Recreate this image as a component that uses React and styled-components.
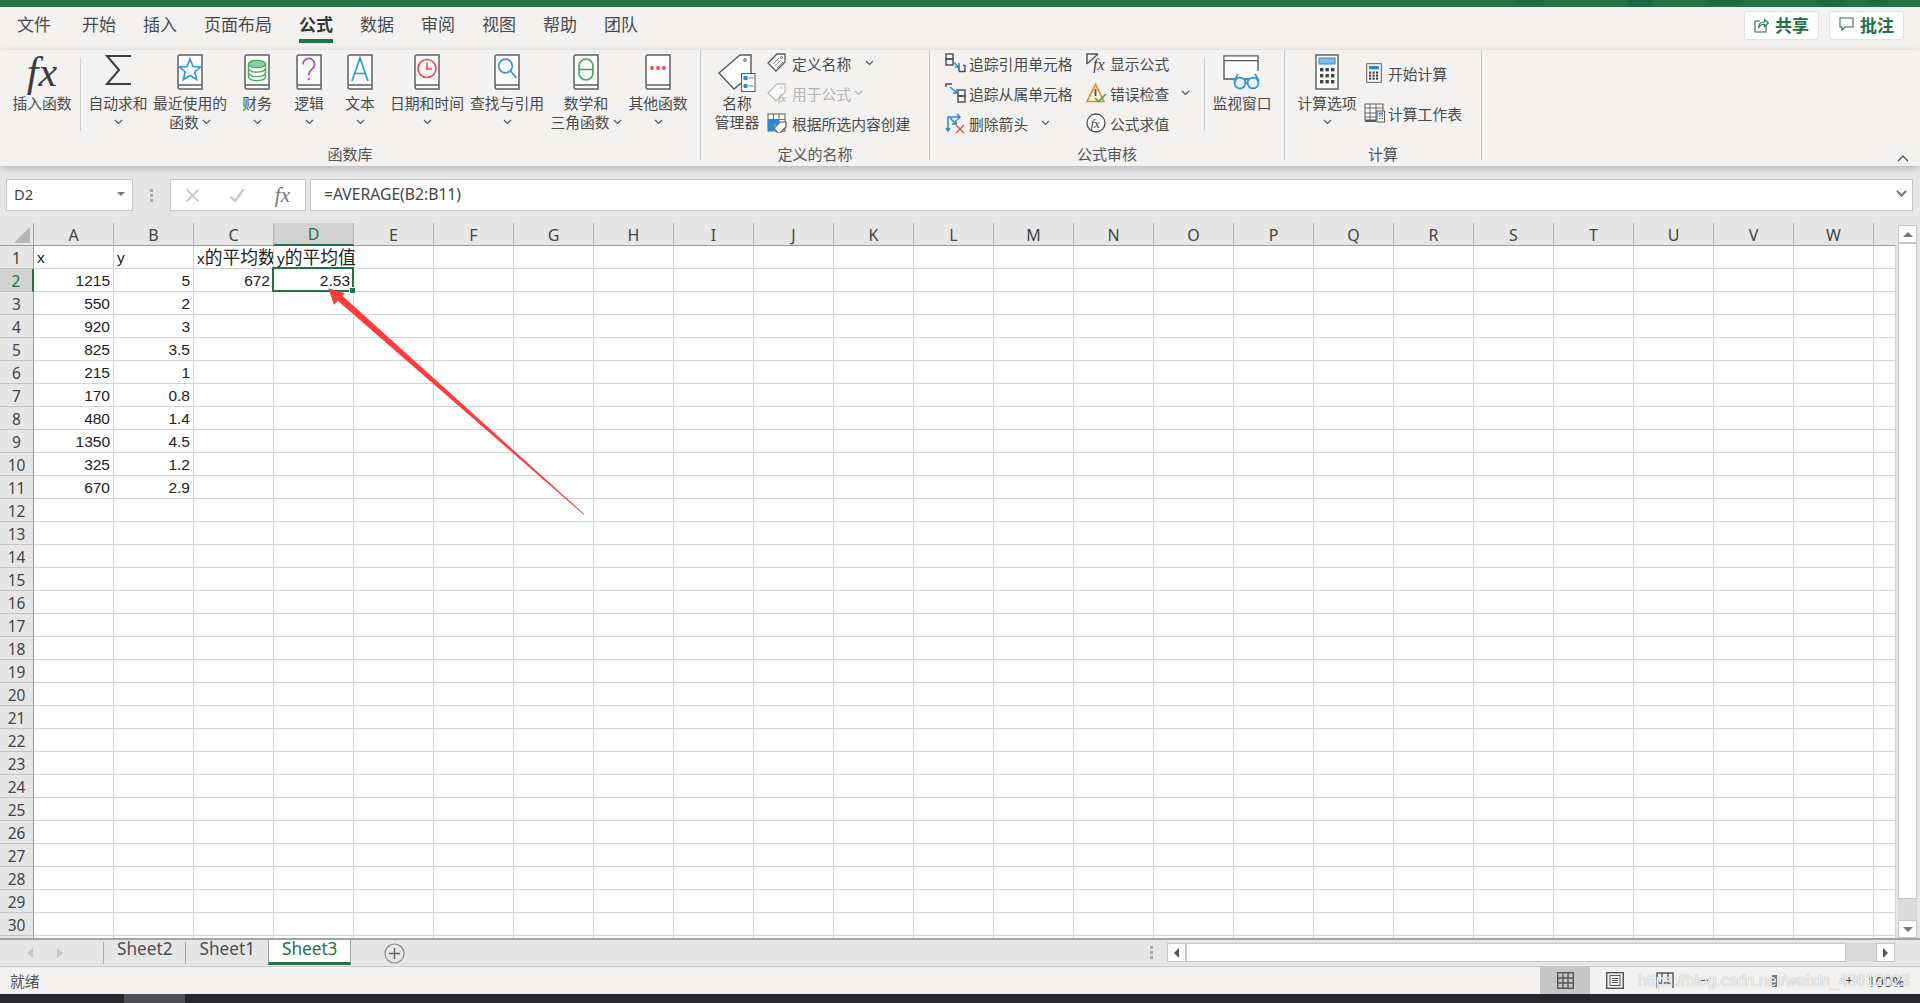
import React from 'react';
import styled, { createGlobalStyle } from 'styled-components';

const GlobalStyle = createGlobalStyle`
  html, body {
    margin: 0;
    padding: 0;
    background: #e6e6e6;
    overflow: hidden;
  }
  * {
    box-sizing: border-box;
  }
`;

const CJK = `"Noto Sans CJK SC", "Noto Sans", sans-serif`;
const GREEN = '#217346';
const INK = '#4a4a4a';

const Page = styled.div`
  position: relative;
  width: 1920px;
  height: 1003px;
  overflow: hidden;
  display: flex;
  flex-direction: column;
  font-family: ${CJK};
  color: ${INK};
`;

const TitleStrip = styled.div`
  height: 7px;
  flex: none;
  background: ${GREEN};
  display: flex;
  justify-content: flex-end;
`;

const TabBar = styled.div`
  height: 43px;
  flex: none;
  background: #f3f2f1;
  display: flex;
  align-items: flex-start;
  padding: 0 16px 0 17px;
  gap: 27px;
`;

const MenuTab = styled.div`
  height: 36px;
  padding-top: 3px;
  font-size: 17px;
  line-height: 28px;
  font-weight: ${p => (p.$active ? 700 : 400)};
  color: ${p => (p.$active ? '#2f3a34' : INK)};
  border-bottom: ${p => (p.$active ? `4px solid ${GREEN}` : 'none')};
  margin-right: ${p => (p.$gapAfter ? '4px' : 0)};
`;

const TopActions = styled.div`
  margin-left: auto;
  display: flex;
  gap: 10px;
  padding-top: 4px;
`;

const ActionButton = styled.div`
  width: 75px;
  height: 29px;
  background: #fff;
  border: 1px solid #e3e3e3;
  border-radius: 3px;
  display: flex;
  align-items: center;
  justify-content: center;
  gap: 6px;
  padding-bottom: 2px;
  color: ${GREEN};
  font-weight: 700;
  font-size: 17px;
`;

const Ribbon = styled.div`
  position: relative;
  z-index: 3;
  height: 116px;
  flex: none;
  background: #f3f2f1;
  box-shadow: 0 2px 7px rgba(0, 0, 0, 0.22);
  display: flex;
`;

const Group = styled.div`
  width: ${p => p.$width}px;
  flex: none;
  height: 110px;
  border-right: 1px solid #c8c8c8;
  display: flex;
  flex-direction: column;
`;

const GroupTools = styled.div`
  height: 96px;
  flex: none;
  display: flex;
  padding-left: ${p => p.$pad || 0}px;
`;

const GroupLabel = styled.div`
  height: 14px;
  font-size: 15px;
  line-height: 15px;
  text-align: center;
  color: #555;
`;

const InnerDivider = styled.div`
  width: 1px;
  height: 74px;
  margin: 7px ${p => p.$after || 0}px 0 0;
  background: #cfcfcf;
  flex: none;
`;

const BigButton = styled.div`
  width: ${p => p.$width}px;
  flex: none;
  display: flex;
  flex-direction: column;
  align-items: center;
  padding-top: 4px;
`;

const BigIcon = styled.div`
  height: 36px;
  margin-bottom: 3px;
  display: flex;
  align-items: flex-start;
  justify-content: center;
`;

const BigLine = styled.div`
  height: 19px;
  line-height: 19px;
  font-size: 14.8px;
  white-space: nowrap;
  display: flex;
  align-items: center;
  gap: 3px;
`;

const SmallColumn = styled.div`
  width: ${p => p.$width}px;
  flex: none;
  display: flex;
  flex-direction: column;
  margin-top: ${p => p.$top || 0}px;
`;

const SmallRow = styled.div`
  height: ${p => p.$height || 30}px;
  flex: none;
  display: flex;
  align-items: center;
  font-size: 14.8px;
  white-space: nowrap;
  color: ${p => (p.$muted ? '#b4b4b4' : INK)};
`;

const SmallIcon = styled.span`
  width: ${p => p.$width || 25}px;
  height: 20px;
  flex: none;
  display: flex;
  align-items: center;
  padding-left: ${p => p.$inset || 0}px;
`;

const SmallChevron = styled.span`
  display: flex;
  margin-left: ${p => p.$gap}px;
`;

const FxMark = styled.span`
  font-family: "Liberation Serif", serif;
  font-style: italic;
  font-size: ${p => p.$size}px;
  line-height: ${p => p.$line}px;
  color: ${p => p.$color || '#3c3c3c'};
`;

const CollapseButton = styled.div`
  position: absolute;
  right: 11px;
  top: 104px;
  display: flex;
`;

const FormulaBar = styled.div`
  height: 57px;
  flex: none;
  background: #e6e6e6;
  display: flex;
  padding: 13px 7px 12px 6px;
`;

const NameBox = styled.div`
  width: 127px;
  background: #fff;
  border: 1px solid #c6c6c6;
  display: flex;
  align-items: center;
  justify-content: space-between;
  padding: 0 7px 2px 7px;
  font-family: "Noto Sans", sans-serif;
  font-size: 14.8px;
  color: #444;
`;

const DropTriangle = styled.span`
  width: 0;
  height: 0;
  border-left: 4px solid transparent;
  border-right: 4px solid transparent;
  border-top: 4px solid #777;
`;

const GripDots = styled.div`
  width: 37px;
  flex: none;
  display: flex;
  flex-direction: column;
  align-items: center;
  justify-content: center;
  gap: 2px;
`;

const GripDot = styled.span`
  width: 3px;
  height: 3px;
  background: #a6a6a6;
`;

const FormulaButtons = styled.div`
  width: 136px;
  flex: none;
  background: #fff;
  border: 1px solid #c6c6c6;
  display: flex;
  align-items: center;
  justify-content: space-between;
  padding: 0 15px 0 14px;
`;

const FormulaInput = styled.div`
  flex: 1;
  margin-left: 4px;
  background: #fff;
  border: 1px solid #c6c6c6;
  display: flex;
  align-items: center;
  justify-content: space-between;
  padding: 0 5px 2px 13px;
  font-family: "Noto Sans", sans-serif;
  font-size: 15.7px;
  color: #444;
`;

const SheetArea = styled.div`
  height: 715px;
  flex: none;
  display: flex;
  position: relative;
  background: #e6e6e6;
`;

const Grid = styled.div`
  width: 1896px;
  flex: none;
  height: 715px;
  overflow: hidden;
  display: grid;
  grid-template-columns: 34px repeat(23, 80px) 22px;
  grid-auto-rows: 23px;
  font-family: "Liberation Sans", sans-serif;
  font-size: 15.5px;
  color: #222;
`;

const Corner = styled.div`
  background: #e6e6e6;
  border-right: 1px solid #a8a8a8;
  border-bottom: 1px solid #9c9c9c;
  display: flex;
  align-items: flex-end;
  justify-content: flex-end;
  padding: 0 3px 2px 0;
`;

const ColHead = styled.div`
  background: ${p => (p.$active ? '#d2d2d2' : '#e6e6e6')};
  border-right: 1px solid ${p => (p.$end ? 'transparent' : '#b4b4b4')};
  border-bottom: ${p => (p.$active ? `2px solid ${GREEN}` : '1px solid #9c9c9c')};
  display: flex;
  align-items: center;
  justify-content: center;
  padding-top: 1px;
  font-family: "Noto Sans", sans-serif;
  font-size: 16px;
  color: ${p => (p.$active ? GREEN : '#444')};
`;

const RowHead = styled.div`
  background: ${p => (p.$active ? '#d2d2d2' : '#e6e6e6')};
  border-right: ${p => (p.$active ? `2px solid ${GREEN}` : '1px solid #9c9c9c')};
  border-bottom: 1px solid #c2c2c2;
  display: flex;
  align-items: center;
  justify-content: center;
  padding-top: 2px;
  font-family: "Noto Sans", sans-serif;
  font-size: 15.5px;
  color: ${p => (p.$active ? GREEN : '#444')};
`;

const Cell = styled.div`
  position: relative;
  background: #fff;
  border-right: 1px solid #d4d4d4;
  border-bottom: 1px solid #d4d4d4;
  display: flex;
  align-items: flex-end;
  justify-content: ${p => (p.$num ? 'flex-end' : 'flex-start')};
  padding: 0 3px 0 3px;
  line-height: 20px;
  white-space: nowrap;
  overflow: ${p => (p.$clip ? 'hidden' : 'visible')};
`;

const CellText = styled.span`
  position: relative;
  top: ${p => p.$drop || 0}px;
  z-index: 1;
  flex: none;
`;

const Han = styled.span`
  font-family: ${CJK};
  font-size: 17.8px;
  line-height: 19px;
`;

const Selection = styled.div`
  position: absolute;
  left: -2px;
  top: -2px;
  right: -1px;
  bottom: -1px;
  border: 2px solid ${GREEN};
  z-index: 2;
`;

const FillHandle = styled.div`
  position: absolute;
  right: -3px;
  bottom: -3px;
  width: 6px;
  height: 6px;
  background: ${GREEN};
  border: 1px solid #fff;
  border-right: none;
  border-bottom: none;
`;

const ArrowLayer = styled.svg`
  position: absolute;
  left: 320px;
  top: 57px;
  z-index: 4;
`;

const VScroll = styled.div`
  width: 24px;
  flex: none;
  padding: 2px 0 0 2px;
  display: flex;
  flex-direction: column;
`;

const ScrollButton = styled.div`
  width: ${p => p.$width || 19}px;
  height: ${p => p.$height || 19}px;
  flex: none;
  background: #fff;
  border: 1px solid #c6c6c6;
  display: flex;
  align-items: center;
  justify-content: center;
`;

const VThumb = styled.div`
  width: 19px;
  height: 656px;
  flex: none;
  background: #fff;
  border: 1px solid #c6c6c6;
`;

const VTrack = styled.div`
  width: 19px;
  flex: 1;
  background: #dadada;
`;

const SheetBar = styled.div`
  height: 29px;
  flex: none;
  background: #e6e6e6;
  border-top: 2px solid #a3a3a3;
  border-bottom: 1px solid #c8c8c8;
  display: flex;
  align-items: flex-start;
`;

const SheetNav = styled.div`
  width: 103px;
  flex: none;
  height: 26px;
  display: flex;
  align-items: center;
  padding-left: 27px;
  gap: 24px;
`;

const SheetTab = styled.div`
  height: ${p => (p.$active ? 25 : 22)}px;
  margin-top: ${p => (p.$active ? 0 : 2)}px;
  padding: 0 13px;
  font-family: "Noto Sans", sans-serif;
  font-size: 17.2px;
  line-height: ${p => (p.$active ? 18 : 14)}px;
  background: ${p => (p.$active ? '#fff' : 'transparent')};
  color: ${p => (p.$active ? GREEN : '#4c4c55')};
  border-left: 1px solid ${p => (p.$active ? '#a3a3a3' : '#a8a8a8')};
  border-right: ${p => (p.$active ? '1px solid #a3a3a3' : 'none')};
  border-bottom: ${p => (p.$active ? `3px solid ${GREEN}` : 'none')};
`;

const AddSheet = styled.div`
  margin: 3px 0 0 33px;
  display: flex;
`;

const HScroll = styled.div`
  margin-left: auto;
  margin-top: 3px;
  width: 745px;
  margin-right: 25px;
  display: flex;
  align-items: center;
`;

const HDots = styled.div`
  width: 17px;
  flex: none;
  display: flex;
  flex-direction: column;
  gap: 2px;
  align-items: flex-start;
`;

const HThumb = styled.div`
  width: 660px;
  height: 19px;
  flex: none;
  background: #fff;
  border: 1px solid #c6c6c6;
`;

const HTrack = styled.div`
  flex: 1;
  height: 19px;
  background: #dadada;
`;

const StatusBar = styled.div`
  position: relative;
  height: 27px;
  flex: none;
  background: #f3f2f1;
  display: flex;
  align-items: center;
  padding-left: 10px;
  font-size: 14.8px;
  color: #555;
`;

const ViewSwitch = styled.div`
  margin-left: auto;
  height: 27px;
  display: flex;
  align-items: center;
  margin-right: 230px;
`;

const ViewButton = styled.div`
  width: 50px;
  height: 27px;
  background: ${p => (p.$active ? '#c6c6c6' : 'transparent')};
  display: flex;
  align-items: center;
  justify-content: center;
`;

const ZoomControls = styled.div`
  position: absolute;
  left: 1700px;
  top: 0;
  width: 216px;
  height: 27px;
  display: flex;
  align-items: center;
  font-family: "Noto Sans", sans-serif;
  font-size: 14.5px;
  color: #444;
`;

const ZoomMinus = styled.span`
  width: 8px;
  height: 1px;
  background: #444;
  flex: none;
`;

const ZoomThumb = styled.span`
  width: 5px;
  height: 12px;
  background: #777;
  flex: none;
  margin-left: 64px;
`;

const ZoomPlus = styled.span`
  flex: none;
  margin-left: 68px;
  line-height: 1;
`;

const ZoomValue = styled.span`
  flex: none;
  margin-left: 14px;
`;

const Watermark = styled.div`
  position: absolute;
  left: 1638px;
  top: 2px;
  font-family: "Liberation Sans", sans-serif;
  font-size: 16px;
  line-height: 24px;
  white-space: nowrap;
  color: rgba(255, 255, 255, 0.88);
  text-shadow: 0 0 1px #888;
  z-index: 5;
`;

const Taskbar = styled.div`
  height: 9px;
  flex: none;
  background: #27262c;
  display: flex;
  overflow: hidden;
`;

const TaskItem = styled.div`
  width: 61px;
  margin-left: 124px;
  background: #4f4e54;
`;

const TaskClock = styled.div`
  margin-left: 1603px;
  padding-top: 6px;
  font-family: "Noto Sans", sans-serif;
  font-size: 13px;
  line-height: 16px;
  color: #fff;
`;

// --- icons ---------------------------------------------------------------

const Chevron = ({ color = '#555' }) => (
  <svg width="9" height="6" viewBox="0 0 9 6">
    <path d="M1 1l3.5 3.5L8 1" fill="none" stroke={color} strokeWidth="1.2" />
  </svg>
);

const Book = ({ children }) => (
  <svg width="27" height="36" viewBox="1 0 27 36">
    <path d="M2 31V3a2 2 0 0 1 2-2h22v30H4a2 2 0 0 0 0 4h22v-4" fill="#fbfbfb" stroke="#5f5f5f" strokeWidth="1.5" />
    {children}
  </svg>
);

const Sigma = () => (
  <svg width="27" height="32" viewBox="0 0 27 32">
    <path d="M26 2H2l12 14L2 30h24" fill="none" stroke="#3e3e3e" strokeWidth="2" />
  </svg>
);

const StarGlyph = () => (
  <path d="M14 5l3 7.5 7.6.5-5.8 5 1.9 7.5-6.7-4-6.7 4 1.9-7.5-5.8-5 7.6-.5z" fill="none" stroke="#2b98de" strokeWidth="1.6" />
);

const StackGlyph = () => (
  <g stroke="#47a860" strokeWidth="1.4" fill="none">
    <ellipse cx="14" cy="10" rx="8.5" ry="3.6" fill="#8fd19e" />
    <path d="M5.5 10v13c0 2 3.8 3.6 8.5 3.6s8.5-1.6 8.5-3.6V10" />
    <path d="M5.5 14.5c0 2 3.8 3.6 8.5 3.6s8.5-1.6 8.5-3.6M5.5 19c0 2 3.8 3.6 8.5 3.6s8.5-1.6 8.5-3.6" />
  </g>
);

const QuestionGlyph = () => (
  <path d="M8 10.5a5.8 5.8 0 1 1 9.3 4.4c-2.4 1.9-3.6 3-3.6 6.4m0 2.4v2.6" fill="none" stroke="#b14ec4" strokeWidth="1.7" />
);

const LetterGlyph = () => (
  <path d="M6 27L14 4l8 23M8.7 19.5h10.6" fill="none" stroke="#2b98de" strokeWidth="1.7" />
);

const ClockGlyph = () => (
  <g fill="none" stroke="#ea4a4a" strokeWidth="1.6">
    <circle cx="14" cy="14.5" r="9" />
    <path d="M14 8.5v6.5h5" />
  </g>
);

const SearchGlyph = () => (
  <g fill="none" stroke="#2b98de" strokeWidth="1.7">
    <circle cx="12.5" cy="12" r="6.8" />
    <path d="M17.5 17l6 7" />
  </g>
);

const ThetaGlyph = () => (
  <g fill="none" stroke="#47a860" strokeWidth="1.7">
    <rect x="7" y="5" width="14" height="21" rx="7" />
    <path d="M7 15.5h14" />
  </g>
);

const DotsGlyph = () => (
  <g fill="#ea4a4a">
    <circle cx="8" cy="14" r="1.9" />
    <circle cx="14" cy="14" r="1.9" />
    <circle cx="20" cy="14" r="1.9" />
  </g>
);

const NameManagerIcon = () => (
  <svg width="38" height="38" viewBox="0 0 38 38">
    <path d="M1 19L22 1h11v20L16 35z" fill="#fbfbfb" stroke="#5a5a5a" strokeWidth="1.4" />
    <circle cx="27" cy="6" r="1.3" fill="none" stroke="#5a5a5a" />
    <rect x="23.5" y="19.5" width="13.5" height="18" fill="#fbfbfb" stroke="#5a5a5a" />
    <rect x="25.5" y="22" width="4" height="4" fill="#2b88d8" />
    <rect x="25.5" y="30" width="4" height="4" fill="#2b88d8" />
    <path d="M30.5 24h5M30.5 32h5" stroke="#2b88d8" strokeWidth="1.2" />
  </svg>
);

const TagIcon = ({ muted }) => {
  const c = muted ? '#bdbdbd' : '#5a5a5a';
  return (
    <svg width="20" height="20" viewBox="0 0 20 20">
      <path d="M1 10L10 1h8v8l-9 9z" fill="#fbfbfb" stroke={c} strokeWidth="1.3" />
      <circle cx="14.5" cy="4.5" r="1" fill="none" stroke={c} />
      {!muted && <path d="M6 11l6-6M8 13l6-6M10 15l6-6" stroke="#8a8a8a" strokeWidth="1" />}
      {muted && (
        <text x="11" y="19" fontFamily="Liberation Serif, serif" fontStyle="italic" fontSize="11" fill="#a8a8a8">fx</text>
      )}
    </svg>
  );
};

const CreateIcon = () => (
  <svg width="20" height="20" viewBox="0 0 20 20">
    <rect x="1" y="1" width="17" height="17" fill="#fbfbfb" stroke="#5a5a5a" />
    <path d="M6.5 1v17M12 1v17M1 6.5h17M1 12h17" stroke="#5a5a5a" strokeWidth="0.9" />
    <rect x="1" y="6.5" width="5.5" height="11.5" fill="#2b88d8" />
    <rect x="6.5" y="6.5" width="5.5" height="5" fill="#2b88d8" />
    <path d="M7 15l6-6h6v5l-6 6h-2z" fill="#fbfbfb" stroke="#5a5a5a" strokeWidth="1.2" />
  </svg>
);

const TracePrecedents = () => (
  <svg width="21" height="20" viewBox="0 0 21 20">
    <g fill="none" stroke="#4e4e4e" strokeWidth="1.4">
      <rect x="1" y="1" width="7" height="5" />
      <rect x="1" y="6" width="7" height="6" />
      <path d="M14 18.5h6v-6h-2" />
      <path d="M14 13.5v5" />
    </g>
    <path d="M8 9l6 5m0-4v4h-4" fill="none" stroke="#2b88d8" strokeWidth="1.5" />
  </svg>
);

const TraceDependents = () => (
  <svg width="21" height="20" viewBox="0 0 21 20">
    <g fill="none" stroke="#4e4e4e" strokeWidth="1.4">
      <path d="M1 4V1h6" />
      <rect x="13" y="7" width="7" height="6" />
      <rect x="13" y="13" width="7" height="6" />
    </g>
    <path d="M5 4l7 6m0-4v4H8" fill="none" stroke="#2b88d8" strokeWidth="1.5" />
  </svg>
);

const RemoveArrows = () => (
  <svg width="21" height="21" viewBox="0 0 21 21">
    <g fill="none" stroke="#2b88d8" strokeWidth="1.5">
      <path d="M3 18V4h12M12 1l3 3-3 3M1 15l2 3 2-3" />
      <path d="M5 5l6 6m0-4v4H7" />
    </g>
    <path d="M11 12l8 8m0-8l-8 8" stroke="#e84a4a" strokeWidth="1.4" />
  </svg>
);

const ShowFormulaIcon = () => (
  <svg width="20" height="20" viewBox="0 0 20 20">
    <path d="M1 11V1h11" fill="none" stroke="#4e4e4e" strokeWidth="1.4" />
    <path d="M1 11L12 1" stroke="#4e4e4e" strokeWidth="1.2" />
    <text x="7" y="17" fontFamily="Liberation Serif, serif" fontStyle="italic" fontSize="16" fill="#3e3e3e">fx</text>
  </svg>
);

const ErrorCheckIcon = () => (
  <svg width="21" height="20" viewBox="0 0 21 20">
    <path d="M9.5 1.5L1 18.5h17z" fill="#fbf3e4" stroke="#e58a1e" strokeWidth="1.6" />
    <path d="M9.5 6v7" stroke="#4e4e4e" strokeWidth="1.8" />
    <path d="M9 15l3.5 3.5L20 11" fill="none" stroke="#47a860" strokeWidth="1.7" />
  </svg>
);

const EvaluateIcon = () => (
  <svg width="20" height="20" viewBox="0 0 20 20">
    <circle cx="10" cy="10" r="9" fill="#fbfbfb" stroke="#4e4e4e" strokeWidth="1.3" />
    <text x="4.5" y="14.5" fontFamily="Liberation Serif, serif" fontStyle="italic" fontSize="13" fill="#3e3e3e">fx</text>
  </svg>
);

const WatchIcon = () => (
  <svg width="40" height="36" viewBox="0 0 40 36">
    <path d="M27 25H2V2h34v15" fill="#fbfbfb" stroke="#5a5a5a" strokeWidth="1.4" />
    <path d="M2 6.5h34" stroke="#5a5a5a" strokeWidth="1.4" />
    <rect x="2.7" y="2.7" width="32.6" height="3.2" fill="#fbfbfb" />
    <g fill="#f3f2f1" stroke="#2b98de" strokeWidth="1.8">
      <circle cx="18" cy="29" r="5.4" />
      <circle cx="31" cy="29" r="5.4" />
    </g>
    <path d="M12 27l4-7M37 27l-4-7M23 29h3" fill="none" stroke="#2b98de" strokeWidth="1.6" />
  </svg>
);

const CalcOptionsIcon = () => (
  <svg width="24" height="36" viewBox="0 0 24 36">
    <rect x="1" y="1" width="22" height="34" fill="#fbfbfb" stroke="#5a5a5a" strokeWidth="1.4" />
    <rect x="4" y="4" width="16" height="6" fill="#86b9e3" stroke="#2b88d8" />
    {[14, 20, 26].map(y => [5, 10.5, 16].map(x => <rect key={`${x}-${y}`} x={x} y={y} width="3.4" height="3.4" fill="#444" />))}
  </svg>
);

const CalcNowIcon = () => (
  <svg width="16" height="20" viewBox="0 0 16 20">
    <rect x="0.7" y="0.7" width="14.6" height="18.6" fill="#fbfbfb" stroke="#5a5a5a" />
    <rect x="3" y="3" width="10" height="3.4" fill="#2b88d8" />
    {[8.5, 11.5, 14.5].map(y => [3, 6.5, 10].map(x => <rect key={`${x}-${y}`} x={x} y={y} width="2.2" height="2.2" fill="#444" />))}
  </svg>
);

const CalcSheetIcon = () => (
  <svg width="21" height="20" viewBox="0 0 21 20">
    <rect x="1" y="1" width="18" height="16" fill="#fbfbfb" stroke="#5a5a5a" />
    <path d="M1 5h18M1 10h18M1 14h12M6 1v16M12 1v16" stroke="#5a5a5a" strokeWidth="0.9" />
    <path d="M1 17h11v2H1z" fill="#5a5a5a" />
    <rect x="13" y="8" width="7.5" height="11" fill="#fbfbfb" stroke="#5a5a5a" />
    <rect x="14.5" y="9.5" width="4.5" height="2" fill="#2b88d8" />
    <path d="M15 13h1.4M17.6 13H19M15 15.5h1.4M17.6 15.5H19" stroke="#444" strokeWidth="1.2" />
  </svg>
);

const ShareIcon = () => (
  <svg width="15" height="16" viewBox="0 0 15 16">
    <path d="M6 4H1v11h11V9" fill="none" stroke={GREEN} strokeWidth="1.1" />
    <path d="M4.5 11c0-4 2.5-6 6-6V2.5L14.5 6 10.5 9.5V7.2c-3 0-4.6 1-6 3.8z" fill="#f4f9f6" stroke={GREEN} strokeWidth="1.1" />
  </svg>
);

const CommentIcon = () => (
  <svg width="15" height="15" viewBox="0 0 15 15">
    <path d="M1 1h13v9H6l-3 3v-3H1z" fill="none" stroke={GREEN} strokeWidth="1.1" />
  </svg>
);

const CancelIcon = () => (
  <svg width="15" height="15" viewBox="0 0 15 15">
    <path d="M1.5 1.5l12 12m0-12l-12 12" stroke="#c8c8c8" strokeWidth="1.8" />
  </svg>
);

const CheckIcon = () => (
  <svg width="16" height="15" viewBox="0 0 16 15">
    <path d="M1.5 8.5L6 13 14.5 1.5" fill="none" stroke="#c8c8c8" strokeWidth="2.4" />
  </svg>
);

const ArrowPolygon = () => (
  <ArrowLayer width="270" height="240" viewBox="320 280 270 240">
    <polygon
      points="328.3,288.3 345,293.3 342.4,295.7 584.2,514 583.6,514.6 337.8,300.8 334,305"
      fill="#ff3c3c"
    />
  </ArrowLayer>
);

// --- data ----------------------------------------------------------------

const MENU = ['文件', '开始', '插入', '页面布局', '公式', '数据', '审阅', '视图', '帮助', '团队'];

const LIBRARY = [
  { w: 66, lines: ['自动求和'], chevronRow: true, icon: <Sigma /> },
  { w: 78, lines: ['最近使用的', '函数'], icon: <Book><StarGlyph /></Book> },
  { w: 56, lines: ['财务'], chevronRow: true, icon: <Book><StackGlyph /></Book> },
  { w: 48, lines: ['逻辑'], chevronRow: true, icon: <Book><QuestionGlyph /></Book> },
  { w: 54, lines: ['文本'], chevronRow: true, icon: <Book><LetterGlyph /></Book> },
  { w: 80, lines: ['日期和时间'], chevronRow: true, icon: <Book><ClockGlyph /></Book> },
  { w: 80, lines: ['查找与引用'], chevronRow: true, icon: <Book><SearchGlyph /></Book> },
  { w: 78, lines: ['数学和', '三角函数'], icon: <Book><ThetaGlyph /></Book> },
  { w: 66, lines: ['其他函数'], chevronRow: true, icon: <Book><DotsGlyph /></Book> },
];

const COLUMNS = 'ABCDEFGHIJKLMNOPQRSTUVW'.split('');

const DATA = {
  A: ['x', 1215, 550, 920, 825, 215, 170, 480, 1350, 325, 670],
  B: ['y', 5, 2, 3, 3.5, 1, 0.8, 1.4, 4.5, 1.2, 2.9],
};

const RibbonButton = ({ item }) => (
  <BigButton $width={item.w}>
    <BigIcon>{item.icon}</BigIcon>
    {item.lines.map((line, i) => (
      <BigLine key={line}>
        {line}
        {!item.chevronRow && i === item.lines.length - 1 && <Chevron />}
      </BigLine>
    ))}
    {item.chevronRow && <BigLine><Chevron /></BigLine>}
  </BigButton>
);

const cellContent = (col, row) => {
  if (DATA[col] && DATA[col][row - 1] !== undefined) return DATA[col][row - 1];
  return null;
};

const SheetGrid = () => {
  const cells = [];
  cells.push(
    <Corner key="corner">
      <svg width="16" height="16" viewBox="0 0 16 16">
        <path d="M16 0v16H0z" fill="#b5b5b5" />
      </svg>
    </Corner>
  );
  COLUMNS.forEach(c => cells.push(<ColHead key={c} $active={c === 'D'}>{c}</ColHead>));
  cells.push(<ColHead key="tail" $end />);

  for (let r = 1; r <= 31; r++) {
    cells.push(<RowHead key={`h${r}`} $active={r === 2}>{r <= 30 ? r : ''}</RowHead>);
    [...COLUMNS, 'X'].forEach(c => {
      const key = `${c}${r}`;
      const value = cellContent(c, r);
      if (key === 'C1') {
        cells.push(<Cell key={key} $clip><CellText $drop={1}>x<Han>的平均数</Han></CellText></Cell>);
      } else if (key === 'D1') {
        cells.push(<Cell key={key}><CellText $drop={1}>y<Han>的平均值</Han></CellText></Cell>);
      } else if (key === 'C2') {
        cells.push(<Cell key={key} $num><CellText>672</CellText></Cell>);
      } else if (key === 'D2') {
        cells.push(
          <Cell key={key} $num>
            <CellText>2.53</CellText>
            <Selection><FillHandle /></Selection>
          </Cell>
        );
      } else {
        cells.push(
          <Cell key={key} $num={typeof value === 'number'}>
            {value !== null && <CellText>{value}</CellText>}
          </Cell>
        );
      }
    });
  }
  return <Grid>{cells}</Grid>;
};

const App = () => (
  <Page>
    <GlobalStyle />
    <TitleStrip>
      <svg width="420" height="7" viewBox="0 0 420 7">
        <g fill="#1c6a3f">
          <ellipse cx="30" cy="1" rx="14" ry="4" />
          <ellipse cx="140" cy="3" rx="12" ry="5" />
          <ellipse cx="225" cy="2" rx="18" ry="4" />
          <ellipse cx="330" cy="2" rx="14" ry="5" />
          <ellipse cx="378" cy="1" rx="10" ry="3" />
        </g>
      </svg>
    </TitleStrip>

    <TabBar>
      {MENU.map((m, i) => (
        <MenuTab key={m} $active={m === '公式'} $gapAfter={i === 0}>{m}</MenuTab>
      ))}
      <TopActions>
        <ActionButton><ShareIcon />共享</ActionButton>
        <ActionButton><CommentIcon />批注</ActionButton>
      </TopActions>
    </TabBar>

    <Ribbon>
      <Group $width={701}>
        <GroupTools $pad={4}>
          <BigButton $width={76}>
            <BigIcon><FxMark $size={42} $line={36}>fx</FxMark></BigIcon>
            <BigLine>插入函数</BigLine>
          </BigButton>
          <InnerDivider $after={4} />
          {LIBRARY.map(item => <RibbonButton key={item.lines[0]} item={item} />)}
        </GroupTools>
        <GroupLabel>函数库</GroupLabel>
      </Group>

      <Group $width={229}>
        <GroupTools $pad={6}>
          <BigButton $width={60}>
            <BigIcon><NameManagerIcon /></BigIcon>
            <BigLine>名称</BigLine>
            <BigLine>管理器</BigLine>
          </BigButton>
          <SmallColumn $width={155} $top={-2}>
            <SmallRow>
              <SmallIcon><TagIcon /></SmallIcon>定义名称
              <SmallChevron $gap={14}><Chevron /></SmallChevron>
            </SmallRow>
            <SmallRow $muted>
              <SmallIcon><TagIcon muted /></SmallIcon>用于公式
              <SmallChevron $gap={3}><Chevron color="#b4b4b4" /></SmallChevron>
            </SmallRow>
            <SmallRow>
              <SmallIcon><CreateIcon /></SmallIcon>根据所选内容创建
            </SmallRow>
          </SmallColumn>
        </GroupTools>
        <GroupLabel>定义的名称</GroupLabel>
      </Group>

      <Group $width={355}>
        <GroupTools $pad={15}>
          <SmallColumn $width={141} $top={-2}>
            <SmallRow><SmallIcon $width={24}><TracePrecedents /></SmallIcon>追踪引用单元格</SmallRow>
            <SmallRow><SmallIcon $width={24}><TraceDependents /></SmallIcon>追踪从属单元格</SmallRow>
            <SmallRow>
              <SmallIcon $width={24}><RemoveArrows /></SmallIcon>删除箭头
              <SmallChevron $gap={13}><Chevron /></SmallChevron>
            </SmallRow>
          </SmallColumn>
          <SmallColumn $width={118} $top={-2}>
            <SmallRow><SmallIcon $width={24}><ShowFormulaIcon /></SmallIcon>显示公式</SmallRow>
            <SmallRow>
              <SmallIcon $width={24}><ErrorCheckIcon /></SmallIcon>错误检查
              <SmallChevron $gap={12}><Chevron /></SmallChevron>
            </SmallRow>
            <SmallRow><SmallIcon $width={24}><EvaluateIcon /></SmallIcon>公式求值</SmallRow>
          </SmallColumn>
          <InnerDivider />
          <BigButton $width={74}>
            <BigIcon><WatchIcon /></BigIcon>
            <BigLine>监视窗口</BigLine>
          </BigButton>
        </GroupTools>
        <GroupLabel>公式审核</GroupLabel>
      </Group>

      <Group $width={197}>
        <GroupTools $pad={12}>
          <BigButton $width={60}>
            <BigIcon><CalcOptionsIcon /></BigIcon>
            <BigLine>计算选项</BigLine>
            <BigLine><Chevron /></BigLine>
          </BigButton>
          <SmallColumn $width={115} $top={3}>
            <SmallRow $height={40}>
              <SmallIcon $width={31} $inset={9}><CalcNowIcon /></SmallIcon>
              开始计算
            </SmallRow>
            <SmallRow $height={40}>
              <SmallIcon $width={31} $inset={7}><CalcSheetIcon /></SmallIcon>
              计算工作表
            </SmallRow>
          </SmallColumn>
        </GroupTools>
        <GroupLabel>计算</GroupLabel>
      </Group>

      <CollapseButton>
        <svg width="12" height="8" viewBox="0 0 12 8">
          <path d="M1 7l5-5 5 5" fill="none" stroke="#444" strokeWidth="1.2" />
        </svg>
      </CollapseButton>
    </Ribbon>

    <FormulaBar>
      <NameBox>D2<DropTriangle /></NameBox>
      <GripDots><GripDot /><GripDot /><GripDot /></GripDots>
      <FormulaButtons>
        <CancelIcon />
        <CheckIcon />
        <FxMark $size={21} $line={24} $color="#777">fx</FxMark>
      </FormulaButtons>
      <FormulaInput>
        =AVERAGE(B2:B11)
        <svg width="11" height="8" viewBox="0 0 11 8">
          <path d="M1 1l4.5 4.5L10 1" fill="none" stroke="#777" strokeWidth="2.2" />
        </svg>
      </FormulaInput>
    </FormulaBar>

    <SheetArea>
      <SheetGrid />
      <VScroll>
        <ScrollButton $height={18}>
          <svg width="10" height="5" viewBox="0 0 10 5"><path d="M5 0l5 5H0z" fill="#777" /></svg>
        </ScrollButton>
        <VThumb />
        <VTrack />
        <ScrollButton $height={18}>
          <svg width="10" height="5" viewBox="0 0 10 5"><path d="M0 0h10L5 5z" fill="#777" /></svg>
        </ScrollButton>
      </VScroll>
      <ArrowPolygon />
    </SheetArea>

    <SheetBar>
      <SheetNav>
        <svg width="6" height="10" viewBox="0 0 6 10"><path d="M6 0v10L0 5z" fill="#c4c4c4" /></svg>
        <svg width="6" height="10" viewBox="0 0 6 10"><path d="M0 0v10l6-5z" fill="#c4c4c4" /></svg>
      </SheetNav>
      <SheetTab>Sheet2</SheetTab>
      <SheetTab>Sheet1</SheetTab>
      <SheetTab $active>Sheet3</SheetTab>
      <AddSheet>
        <svg width="21" height="21" viewBox="0 0 21 21">
          <circle cx="10.5" cy="10.5" r="9.5" fill="none" stroke="#8a8a8a" strokeWidth="1.2" />
          <path d="M10.5 5v11M5 10.5h11" stroke="#666" strokeWidth="1.4" />
        </svg>
      </AddSheet>
      <HScroll>
        <HDots><GripDot /><GripDot /><GripDot /></HDots>
        <ScrollButton>
          <svg width="5" height="10" viewBox="0 0 5 10"><path d="M5 0v10L0 5z" fill="#555" /></svg>
        </ScrollButton>
        <HThumb />
        <HTrack />
        <ScrollButton>
          <svg width="5" height="10" viewBox="0 0 5 10"><path d="M0 0v10l5-5z" fill="#555" /></svg>
        </ScrollButton>
      </HScroll>
    </SheetBar>

    <StatusBar>
      就绪
      <ViewSwitch>
        <ViewButton $active>
          <svg width="17" height="17" viewBox="0 0 17 17">
            <rect x="0.7" y="0.7" width="15.6" height="15.6" fill="none" stroke="#555" strokeWidth="1.4" />
            <path d="M6 1v15M11 1v15M1 6h15M1 11h15" stroke="#555" strokeWidth="1.3" />
          </svg>
        </ViewButton>
        <ViewButton>
          <svg width="18" height="17" viewBox="0 0 18 17">
            <rect x="0.7" y="0.7" width="16.6" height="15.6" fill="none" stroke="#555" strokeWidth="1.4" />
            <rect x="4" y="3.5" width="10" height="10" fill="none" stroke="#555" />
            <path d="M6 6.5h6M6 8.5h6M6 10.5h6" stroke="#555" />
          </svg>
        </ViewButton>
        <ViewButton>
          <svg width="18" height="17" viewBox="0 0 18 17">
            <path d="M1 16V1h16v15" fill="none" stroke="#555" strokeWidth="1.4" />
            <path d="M6 1v9M12 1v9M1 11h16" stroke="#555" strokeWidth="1.4" />
          </svg>
        </ViewButton>
      </ViewSwitch>
      <ZoomControls>
        <ZoomMinus />
        <ZoomThumb />
        <ZoomPlus>+</ZoomPlus>
        <ZoomValue>100%</ZoomValue>
      </ZoomControls>
      <Watermark>https://blog.csdn.net/weixin_43612023</Watermark>
    </StatusBar>

    <Taskbar>
      <TaskItem />
      <TaskClock>20:04</TaskClock>
    </Taskbar>
  </Page>
);

export default App;
